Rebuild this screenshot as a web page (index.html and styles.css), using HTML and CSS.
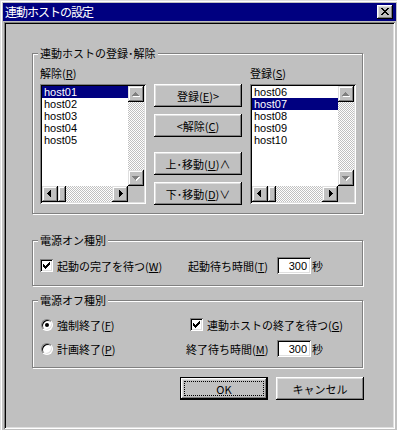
FILE: index.html
```html
<!DOCTYPE html>
<html lang="ja">
<head>
  <meta charset="UTF-8" />
  <title>連動ホストの設定</title>
  <link rel="stylesheet" href="styles.css">
</head>
<body>
  <div class="window">
    <!-- barra de titulo -->
    <div class="caption">
      <span class="caption-text">連動ホストの設定</span>
      <button class="close-btn">
        <svg width="8" height="7" viewBox="0 0 8 7" shape-rendering="crispEdges"><path fill="#000" d="M0 0h2v1h-2z M6 0h2v1h-2z M1 1h2v1h-2z M5 1h2v1h-2z M2 2h4v1h-4z M3 3h2v1h-2z M2 4h4v1h-4z M1 5h2v1h-2z M5 5h2v1h-2z M0 6h2v1h-2z M6 6h2v1h-2z"/></svg>
      </button>
    </div>

    <div class="client">
      <!-- registro / liberacion -->
      <fieldset class="group group-hosts">
        <legend>連動ホストの登録･解除</legend>
        <div class="hosts">
          <div class="host-col">
            <div class="list-label">解除(<u>R</u>)</div>
            <div class="listbox">
              <div class="items">
                <div class="item sel">host01</div>
                <div class="item">host02</div>
                <div class="item">host03</div>
                <div class="item">host04</div>
                <div class="item">host05</div>
              </div>
              <div class="vscroll">
                <div class="sb-btn"><svg width="16" height="16" viewBox="0 0 16 16" shape-rendering="crispEdges"><path fill="#fff" d="M8 7h1v1h-1z M7 8h3v1h-3z M6 9h5v1h-5z M5 10h7v1h-7z"/><path fill="#808080" d="M7 6h1v1h-1z M6 7h3v1h-3z M5 8h5v1h-5z M4 9h7v1h-7z"/></svg></div>
                <div class="sb-track"></div>
                <div class="sb-btn"><svg width="16" height="16" viewBox="0 0 16 16" shape-rendering="crispEdges"><path fill="#fff" d="M5 7h7v1h-7z M6 8h5v1h-5z M7 9h3v1h-3z M8 10h1v1h-1z"/><path fill="#808080" d="M4 6h7v1h-7z M5 7h5v1h-5z M6 8h3v1h-3z M7 9h1v1h-1z"/></svg></div>
              </div>
              <div class="hscroll">
                <div class="sb-btn"><svg width="16" height="16" viewBox="0 0 16 16" shape-rendering="crispEdges"><path fill="#000" d="M5 7h1v1h-1z M6 6h1v3h-1z M7 5h1v5h-1z M8 4h1v7h-1z"/></svg></div>
                <div class="sb-thumb"></div>
                <div class="sb-track"></div>
                <div class="sb-btn"><svg width="16" height="16" viewBox="0 0 16 16" shape-rendering="crispEdges"><path fill="#000" d="M7 4h1v7h-1z M8 5h1v5h-1z M9 6h1v3h-1z M10 7h1v1h-1z"/></svg></div>
              </div>
              <div class="sb-corner"></div>
            </div>
          </div>

          <div class="move-col">
            <button class="btn">登録(<u>E</u>)&gt;</button>
            <button class="btn">&lt;解除(<u>C</u>)</button>
            <button class="btn spaced">上･移動(<u>U</u>)∧</button>
            <button class="btn">下･移動(<u>D</u>)∨</button>
          </div>

          <div class="host-col">
            <div class="list-label">登録(<u>S</u>)</div>
            <div class="listbox">
              <div class="items">
                <div class="item">host06</div>
                <div class="item sel">host07</div>
                <div class="item">host08</div>
                <div class="item">host09</div>
                <div class="item">host10</div>
              </div>
              <div class="vscroll">
                <div class="sb-btn"><svg width="16" height="16" viewBox="0 0 16 16" shape-rendering="crispEdges"><path fill="#fff" d="M8 7h1v1h-1z M7 8h3v1h-3z M6 9h5v1h-5z M5 10h7v1h-7z"/><path fill="#808080" d="M7 6h1v1h-1z M6 7h3v1h-3z M5 8h5v1h-5z M4 9h7v1h-7z"/></svg></div>
                <div class="sb-track"></div>
                <div class="sb-btn"><svg width="16" height="16" viewBox="0 0 16 16" shape-rendering="crispEdges"><path fill="#fff" d="M5 7h7v1h-7z M6 8h5v1h-5z M7 9h3v1h-3z M8 10h1v1h-1z"/><path fill="#808080" d="M4 6h7v1h-7z M5 7h5v1h-5z M6 8h3v1h-3z M7 9h1v1h-1z"/></svg></div>
              </div>
              <div class="hscroll">
                <div class="sb-btn"><svg width="16" height="16" viewBox="0 0 16 16" shape-rendering="crispEdges"><path fill="#000" d="M5 7h1v1h-1z M6 6h1v3h-1z M7 5h1v5h-1z M8 4h1v7h-1z"/></svg></div>
                <div class="sb-thumb"></div>
                <div class="sb-track"></div>
                <div class="sb-btn"><svg width="16" height="16" viewBox="0 0 16 16" shape-rendering="crispEdges"><path fill="#000" d="M7 4h1v7h-1z M8 5h1v5h-1z M9 6h1v3h-1z M10 7h1v1h-1z"/></svg></div>
              </div>
              <div class="sb-corner"></div>
            </div>
          </div>
        </div>
      </fieldset>

      <!-- encendido -->
      <fieldset class="group group-on">
        <legend>電源オン種別</legend>
        <div class="on-row">
          <label class="check-item">
            <span class="check"><svg width="7" height="7" viewBox="0 0 7 7" shape-rendering="crispEdges"><path fill="#000" d="M6 0h1v1h-1z M5 1h2v1h-2z M0 2h1v1h-1z M4 2h3v1h-3z M0 3h2v1h-2z M3 3h3v1h-3z M0 4h5v1h-5z M1 5h3v1h-3z M2 6h1v1h-1z"/></svg></span>
            <span>起動の完了を待つ(<u>W</u>)</span>
          </label>
          <span class="time-label">起動待ち時間(<u>T</u>)</span>
          <input class="num" type="text" value="300">
          <span class="unit">秒</span>
        </div>
      </fieldset>

      <!-- apagado -->
      <fieldset class="group group-off">
        <legend>電源オフ種別</legend>
        <div class="off-grid">
          <label class="radio-item"><span class="radio on"><span class="dot"></span></span><span>強制終了(<u>F</u>)</span></label>
          <label class="check-item wide">
            <span class="check"><svg width="7" height="7" viewBox="0 0 7 7" shape-rendering="crispEdges"><path fill="#000" d="M6 0h1v1h-1z M5 1h2v1h-2z M0 2h1v1h-1z M4 2h3v1h-3z M0 3h2v1h-2z M3 3h3v1h-3z M0 4h5v1h-5z M1 5h3v1h-3z M2 6h1v1h-1z"/></svg></span>
            <span>連動ホストの終了を待つ(<u>G</u>)</span>
          </label>
          <label class="radio-item"><span class="radio"></span><span>計画終了(<u>P</u>)</span></label>
          <span class="time-label">終了待ち時間(<u>M</u>)</span>
          <input class="num" type="text" value="300">
          <span class="unit">秒</span>
        </div>
      </fieldset>

      <div class="actions">
        <button class="btn default"><span class="focus">OK</span></button>
        <button class="btn">キャンセル</button>
      </div>
    </div>
  </div>
</body>
</html>
```

FILE: styles.css
```css
* {
  box-sizing: border-box;
  margin: 0;
  padding: 0;
}
html, body {
  width: 397px;
  height: 430px;
  overflow: hidden;
  background: #c0c0c0;
}
body {
  font-family: "Noto Sans CJK JP", sans-serif;
  font-size: 11px;
  color: #000;
  text-autospace: no-autospace;
}
u {
  text-decoration: underline;
  text-underline-offset: 1px;
}
.window {
  width: 399px;
  height: 432px;
  padding: 3px;
  background: #c0c0c0;
  box-shadow: inset 1px 1px #dfdfdf, inset -1px -1px #000, inset 2px 2px #fff, inset -2px -2px #808080;
  display: flex;
  flex-direction: column;
}
.caption {
  height: 18px;
  background: #000080;
  color: #fff;
  display: flex;
  align-items: center;
  justify-content: space-between;
}
.caption-text {
  padding-left: 2px;
  font-size: 12px;
  letter-spacing: -1px;
  line-height: 18px;
}
.close-btn {
  width: 16px;
  height: 14px;
  margin-right: 3px;
  border: 0;
  background: #c0c0c0;
  box-shadow: inset -1px -1px #000, inset 1px 1px #fff, inset -2px -2px #808080, inset 2px 2px #dfdfdf;
  display: flex;
  align-items: center;
  justify-content: center;
}
.close-btn svg {
  display: block;
  margin: 0 1px 1px 0;
}
.client {
  margin: 1px 1px 0;
  height: 407px;
  padding: 25px 0 0 28px;
  box-shadow: inset 1px 1px #808080, inset -1px -1px #fff, inset 2px 2px #000, inset -2px -2px #dfdfdf;
}

/* grupos */
.group {
  width: 331px;
  min-width: 0;
  border: 1px solid #808080;
  box-shadow: inset 1px 1px #fff, 1px 1px #fff;
}
.group legend {
  padding: 0 2px;
  margin-left: -2px;
  line-height: 13px;
  background: #c0c0c0;
}
.group-hosts {
  padding: 6px 6px 8px 7px;
}
.group-on {
  margin-top: 20px;
  padding: 10px 6px 11px 7px;
}
.group-off {
  margin-top: 8px;
  padding: 9px 6px 10px 7px;
}

/* listas */
.hosts {
  display: flex;
  gap: 8px;
}
.host-col {
  display: flex;
  flex-direction: column;
  gap: 4px;
}
.list-label {
  line-height: 14px;
  height: 14px;
}
.listbox {
  width: 106px;
  height: 120px;
  padding: 2px;
  background: #fff;
  box-shadow: inset 1px 1px #808080, inset -1px -1px #fff, inset 2px 2px #000, inset -2px -2px #dfdfdf;
  display: grid;
  grid-template-columns: 86px 16px;
  grid-template-rows: 100px 16px;
}
.items {
  font-family: "Liberation Sans", sans-serif;
  font-size: 11px;
  line-height: 12px;
}
.item {
  height: 12px;
  padding-left: 2px;
}
.item.sel {
  background: #000080;
  color: #fff;
}
.vscroll {
  display: flex;
  flex-direction: column;
}
.hscroll {
  display: flex;
}
.sb-track {
  flex: 1;
  background-image: conic-gradient(#fff 25%, #c0c0c0 0 50%, #fff 0 75%, #c0c0c0 0);
  background-size: 2px 2px;
}
.sb-btn {
  width: 16px;
  height: 16px;
  background: #c0c0c0;
  box-shadow: inset -1px -1px #000, inset 1px 1px #dfdfdf, inset -2px -2px #808080, inset 2px 2px #fff;
}
.sb-btn svg {
  display: block;
}
.sb-thumb {
  width: 8px;
  height: 16px;
  background: #c0c0c0;
  box-shadow: inset -1px -1px #000, inset 1px 1px #dfdfdf, inset -2px -2px #808080, inset 2px 2px #fff;
}
.sb-corner {
  background: #c0c0c0;
}

/* botones */
.move-col {
  display: flex;
  flex-direction: column;
  gap: 7px;
  padding-top: 18px;
}
.btn {
  width: 88px;
  height: 23px;
  border: 0;
  background: #c0c0c0;
  font-family: inherit;
  font-size: 11px;
  color: #000;
  text-autospace: no-autospace;
  box-shadow: inset -1px -1px #000, inset 1px 1px #fff, inset -2px -2px #808080, inset 2px 2px #dfdfdf;
}
.btn.spaced {
  margin-top: 8px;
}
.btn.default {
  border: 1px solid #000;
  padding: 3px;
  display: flex;
}
.focus {
  flex: 1;
  border: 1px dotted #000;
  display: flex;
  align-items: center;
  justify-content: center;
}
.actions {
  width: 332px;
  margin-top: 9px;
  display: flex;
  justify-content: flex-end;
  gap: 8px;
}

/* casillas */
.on-row {
  display: flex;
  align-items: center;
  height: 17px;
}
.check-item {
  display: flex;
  align-items: center;
  gap: 4px;
  width: 148px;
  white-space: nowrap;
}
.check {
  width: 13px;
  height: 13px;
  padding: 3px;
  background: #fff;
  box-shadow: inset 1px 1px #808080, inset -1px -1px #fff, inset 2px 2px #000, inset -2px -2px #dfdfdf;
}
.check svg {
  display: block;
}
.time-label {
  width: 89px;
  white-space: nowrap;
}
.num {
  width: 34px;
  height: 17px;
  border: 0;
  padding: 0 4px 0 2px;
  text-align: right;
  font-family: "Liberation Sans", sans-serif;
  font-size: 11px;
  background: #fff;
  box-shadow: inset 1px 1px #808080, inset -1px -1px #fff, inset 2px 2px #000, inset -2px -2px #dfdfdf;
}
.unit {
  margin-left: 1px;
}
.off-grid {
  display: grid;
  grid-template-columns: 146px 91px 34px auto;
  grid-template-rows: 17px 17px;
  row-gap: 7px;
  align-items: center;
}
.off-grid .time-label {
  width: auto;
}
.check-item.wide {
  grid-column: 2 / span 3;
  margin-left: 4px;
  width: auto;
}
.radio-item {
  display: flex;
  align-items: center;
  gap: 4px;
  padding-left: 1px;
}
.radio {
  width: 12px;
  height: 12px;
  border-radius: 50%;
  background: #fff;
  border: 1px solid;
  border-color: #808080 #fff #fff #808080;
  box-shadow: inset 1px 1px #000, inset -1px -1px #dfdfdf;
  display: flex;
  align-items: center;
  justify-content: center;
}
.dot {
  width: 4px;
  height: 4px;
  border-radius: 50%;
  background: #000;
}
```
